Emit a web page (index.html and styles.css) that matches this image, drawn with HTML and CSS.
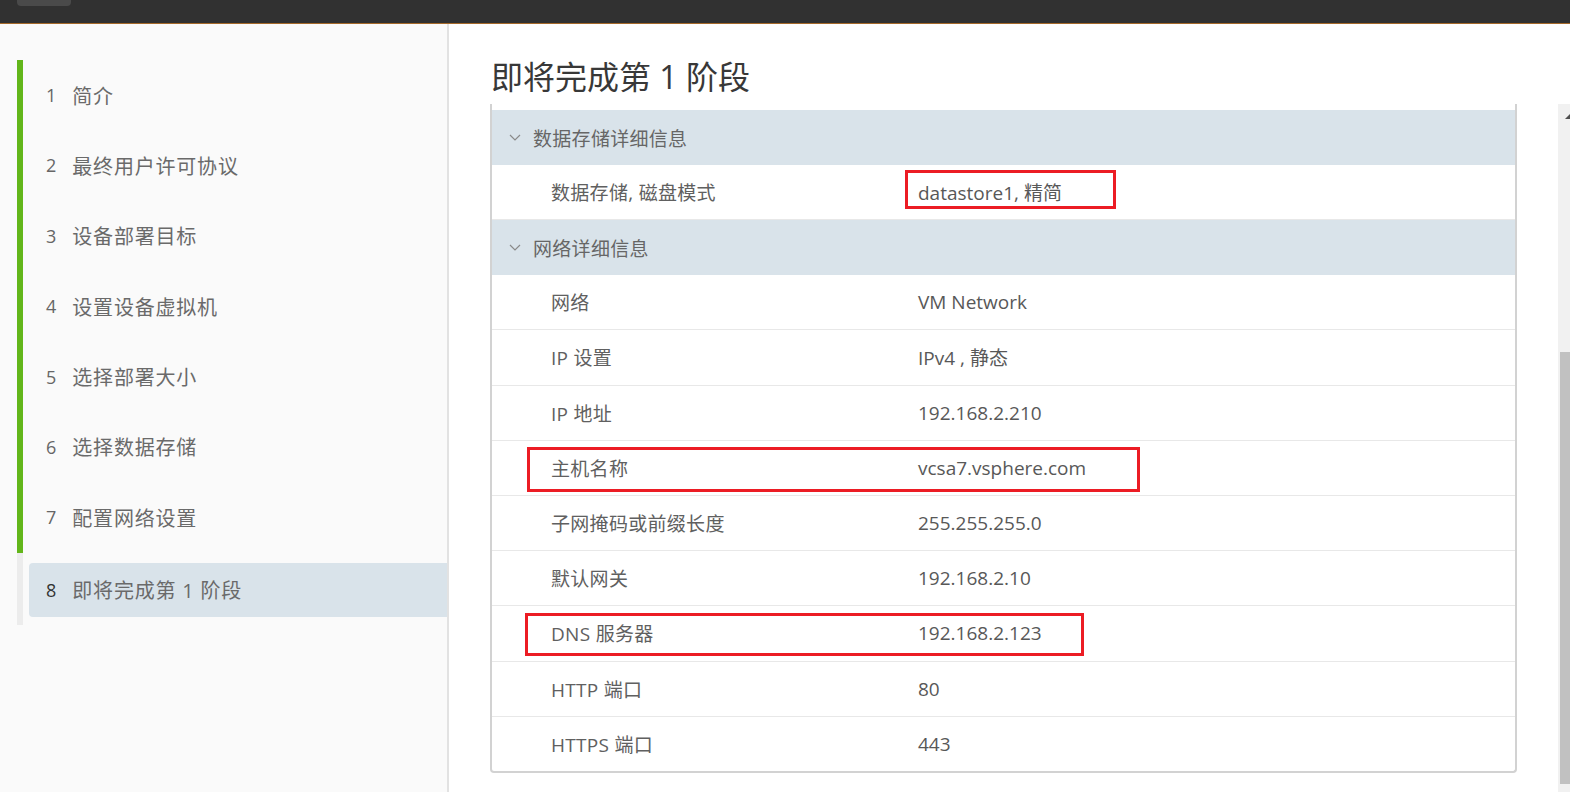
FILE: index.html
```html
<!DOCTYPE html>
<html lang="zh-CN">
<head>
<meta charset="utf-8">
<title>即将完成第 1 阶段</title>
<link rel="stylesheet" href="styles.css">
</head>
<body>
<header class="topbar"><div class="tb-btn"></div></header>
<div class="page">
  <nav class="sidebar">
    <ol class="steps">
      <li class="step"><div class="step-inner"><span class="num">1</span><span class="label">简介</span></div></li>
      <li class="step"><div class="step-inner"><span class="num">2</span><span class="label">最终用户许可协议</span></div></li>
      <li class="step"><div class="step-inner"><span class="num">3</span><span class="label">设备部署目标</span></div></li>
      <li class="step"><div class="step-inner"><span class="num">4</span><span class="label">设置设备虚拟机</span></div></li>
      <li class="step"><div class="step-inner"><span class="num">5</span><span class="label">选择部署大小</span></div></li>
      <li class="step"><div class="step-inner"><span class="num">6</span><span class="label">选择数据存储</span></div></li>
      <li class="step"><div class="step-inner"><span class="num">7</span><span class="label">配置网络设置</span></div></li>
      <li class="step current"><div class="step-inner"><span class="num">8</span><span class="label">即将完成第 1 阶段</span></div></li>
    </ol>
  </nav>
  <main class="main">
    <h1 class="title">即将完成第 1 阶段</h1>
    <div class="scroll">
      <div class="scroll-content">
        <div class="panel">
          <div class="panel-top"></div>
          <div class="section-head">
            <svg class="chev" width="12" height="7" viewBox="0 0 12 7"><polyline points="1,1 6,6 11,1" fill="none" stroke="#8a8a8a" stroke-width="1.2"/></svg>
            <span>数据存储详细信息</span>
          </div>
          <div class="row"><span class="k">数据存储, 磁盘模式</span><span class="v">datastore1, 精简</span><div class="mark mark-ds"></div></div>
          <div class="section-head">
            <svg class="chev" width="12" height="7" viewBox="0 0 12 7"><polyline points="1,1 6,6 11,1" fill="none" stroke="#8a8a8a" stroke-width="1.2"/></svg>
            <span>网络详细信息</span>
          </div>
          <div class="row"><span class="k">网络</span><span class="v">VM Network</span></div>
          <div class="row"><span class="k">IP 设置</span><span class="v">IPv4 , 静态</span></div>
          <div class="row"><span class="k">IP 地址</span><span class="v">192.168.2.210</span></div>
          <div class="row"><span class="k">主机名称</span><span class="v">vcsa7.vsphere.com</span><div class="mark mark-host"></div></div>
          <div class="row"><span class="k">子网掩码或前缀长度</span><span class="v">255.255.255.0</span></div>
          <div class="row"><span class="k">默认网关</span><span class="v">192.168.2.10</span></div>
          <div class="row"><span class="k">DNS 服务器</span><span class="v">192.168.2.123</span><div class="mark mark-dns"></div></div>
          <div class="row"><span class="k">HTTP 端口</span><span class="v">80</span></div>
          <div class="row last"><span class="k">HTTPS 端口</span><span class="v">443</span></div>
        </div>
      </div>
      <div class="scrollbar">
        <div class="sb-arrow"></div>
        <div class="sb-thumb"></div>
      </div>
    </div>
  </main>
</div>
</body>
</html>
```

FILE: styles.css
```css
* { box-sizing: border-box; }
html, body {
  margin: 0;
  padding: 0;
  width: 1570px;
  height: 792px;
  overflow: hidden;
  background: #ffffff;
  font-family: "Open Sans", "Noto Sans CJK SC", sans-serif;
  color: #565656;
}
.topbar {
  height: 24px;
  background: #313131;
  border-bottom: 1px solid #a5692a;
  display: flex;
  padding-left: 17px;
}
.tb-btn {
  width: 54px;
  height: 6px;
  background: #4a4a4a;
  border-radius: 0 0 4px 4px;
}
.page {
  display: flex;
  height: 768px;
}
.sidebar {
  width: 449px;
  flex: none;
  background: #fafafa;
  border-right: 2px solid #e2e2e2;
}
.steps {
  list-style: none;
  margin: 36px 0 0 17px;
  padding: 0;
}
.step {
  height: 70.4px;
  padding: 8px 0 8.4px 6px;
  border-left: 6px solid #62b61a;
}
.step.current {
  height: 72px;
  padding: 10px 0 8px 6px;
  border-left-color: #ececec;
}
.step-inner {
  height: 54px;
  display: flex;
  align-items: center;
  padding-left: 17px;
  border-radius: 4px 0 0 4px;
}
.current .step-inner {
  background: #d9e3ea;
}
.num {
  font-size: 18px;
  color: #666;
  margin-right: 16px;
}
.current .num { color: #333; }
.label {
  font-size: 20px;
  color: #6a6a6a;
  letter-spacing: 0.8px;
}
.main {
  flex: 1;
  display: flex;
  flex-direction: column;
  min-width: 0;
}
.title {
  margin: 0;
  height: 80px;
  padding: 34px 0 0 42px;
  font-size: 32px;
  line-height: 38px;
  font-weight: 400;
  color: #383838;
}
.scroll {
  flex: 1;
  display: flex;
  min-height: 0;
  overflow: hidden;
}
.scroll-content {
  flex: 1;
  padding: 0 41px 0 41px;
  overflow: hidden;
}
.panel {
  border: 2px solid #d2d2d2;
  border-top: none;
  border-radius: 0 0 4px 4px;
}
.panel-top { height: 6px; }
.section-head {
  height: 55px;
  background: #d9e3ea;
  display: flex;
  align-items: center;
  padding-left: 17px;
  font-size: 19px;
  letter-spacing: 0.3px;
  color: #666;
}
.chev { margin-right: 12px; flex: none; }
.row {
  position: relative;
  height: 55.2px;
  display: flex;
  align-items: center;
  border-bottom: 1px solid #e8e8e8;
  font-size: 19px;
}
.row.last { border-bottom: none; height: 54px; }
.k {
  width: 426px;
  padding-left: 59px;
  color: #606060;
  flex: none;
  font-size: 19px;
  letter-spacing: 0.3px;
}
.v {
  color: #585858;
  font-size: 19px;
}
.mark {
  position: absolute;
  border: 3px solid #ec1c24;
  pointer-events: none;
}
.mark-ds { left: 413px; top: 5px; width: 211px; height: 39px; }
.mark-host { left: 35px; top: 6px; width: 613px; height: 45px; }
.mark-dns { left: 33px; top: 7px; width: 559px; height: 43px; }
.scrollbar {
  width: 12px;
  flex: none;
  background: #f1f1f1;
  display: flex;
  flex-direction: column;
  overflow: hidden;
}
.sb-arrow {
  margin: 10px 0 0 7px;
  width: 0;
  height: 0;
  border-left: 5px solid transparent;
  border-bottom: 5px solid #505050;
}
.sb-thumb {
  margin: 233px 0 0 2px;
  height: 432px;
  background: #c1c1c1;
}
```
